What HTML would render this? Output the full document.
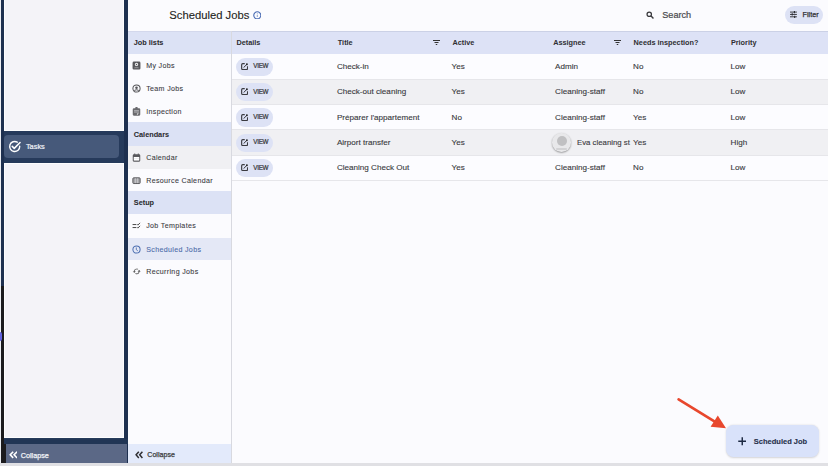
<!DOCTYPE html>
<html><head><meta charset="utf-8">
<style>
*{margin:0;padding:0;box-sizing:border-box}
html,body{width:828px;height:466px;overflow:hidden;background:#fbfbfe;font-family:"Liberation Sans",sans-serif;color:#333}
.a{position:absolute}
.t{position:absolute;white-space:nowrap;line-height:1}
.st{-webkit-text-stroke:0.12px currentColor}
</style></head><body>
<div class="a" style="left:0;top:0;width:127.5px;height:463px;background:#263a5b"></div>
<div class="a" style="left:124px;top:0;width:3.5px;height:463px;background:#1e3050"></div>
<div class="a" style="left:1px;top:0;width:3px;height:286px;background:#1e3050"></div>
<div class="a" style="left:0;top:0;width:1px;height:466px;background:#eceef3"></div>
<div class="a" style="left:1px;top:286px;width:3px;height:177px;background:#1b1b1e"></div>
<div class="a" style="left:0;top:332.2px;width:2.3px;height:9px;border-radius:0 4px 4px 0;background:#6262e0"></div>
<div class="a" style="left:4px;top:0;width:120.1px;height:131.3px;background:#f4f3f8;border:1px solid #fdfdfe;border-top:0"></div>
<div class="a" style="left:4px;top:162.6px;width:120.1px;height:275.9px;background:#f4f3f8;border:1px solid #fdfdfe"></div>
<div class="a" style="left:3.6px;top:134.7px;width:115.8px;height:23.2px;background:#46597a;border-radius:4px"></div>
<svg class="a" style="left:8.2px;top:139.6px;width:13.4px;height:13.4px" viewBox="0 0 24 24"><path d="M21 11.2A9 9 0 1 1 16.6 3.9" fill="none" stroke="#fff" stroke-width="2.5" stroke-linecap="round"/><path d="M7.6 11.4l3.6 3.6L21.6 4.4" fill="none" stroke="#fff" stroke-width="2.8" stroke-linecap="round" stroke-linejoin="round"/></svg>
<div class="t st" style="left:25.9px;top:143.1px;font-size:7.4px;color:#eef0f6;-webkit-text-stroke:0.22px #eef0f6">Tasks</div>
<div class="a" style="left:6px;top:443.5px;width:121px;height:19px;background:#5b6886"></div>
<div class="a" style="left:1px;top:443.5px;width:5px;height:19.5px;background:#1b1b1e"></div>
<div class="a" style="left:4px;top:438.5px;width:124px;height:5px;background:#213555"></div>
<svg class="a" style="left:8.6px;top:451.1px;width:8.8px;height:7.6px" viewBox="0 0 17.6 15.2"><path d="M8.4 1.4L2.4 7.6L8.4 13.8M16.2 1.4L10.2 7.6L16.2 13.8" fill="none" stroke="#fff" stroke-width="3.2"/></svg>
<div class="t st" style="left:20.7px;top:452.1px;font-size:7.25px;color:#f2f3f7;-webkit-text-stroke:0.25px #f2f3f7">Collapse</div>
<div class="a" style="left:127.5px;top:0;width:104.5px;height:463px;background:#fbfbfe"></div>
<div class="a" style="left:231px;top:30.6px;width:1px;height:432.4px;background:#d8d9e0"></div>
<div class="a" style="left:127.5px;top:30.60px;width:103.5px;height:23.2px;background:#dce2f5;box-shadow:inset 0 1px 0 #d3d8ec"></div>
<div class="t st" style="left:133.8px;top:39.10px;font-size:7.3px;font-weight:bold;color:#2b2b2e;-webkit-text-stroke:0.05px">Job lists</div>
<svg class="a" style="left:132.4px;top:61.10px;width:9px;height:9px" viewBox="0 0 24 24"><path fill="#58585c" d="M5 1.5h14a3.5 3.5 0 0 1 3.5 3.5v14a3.5 3.5 0 0 1-3.5 3.5H5A3.5 3.5 0 0 1 1.5 19V5A3.5 3.5 0 0 1 5 1.5z"/><circle cx="12" cy="9.2" r="4.3" fill="#fff"/><circle cx="12" cy="9.2" r="2.1" fill="#58585c"/><path fill="#8a8a8e" d="M5 19.2c1.5-2.6 4-3.8 7-3.8s5.5 1.2 7 3.8z"/></svg>
<div class="t st" style="left:146.2px;top:63.05px;font-size:7.1px;letter-spacing:0.33px;color:#3a3a3e;-webkit-text-stroke:0.08px #3a3a3e">My Jobs</div>
<svg class="a" style="left:132.4px;top:83.90px;width:9px;height:9px" viewBox="0 0 24 24"><circle cx="12" cy="12" r="9.6" fill="none" stroke="#555558" stroke-width="2.7"/><circle cx="12" cy="9.8" r="3.4" fill="#555558"/><path d="M6.2 18.2c1.6-2 3.6-3 5.8-3s4.2 1 5.8 3" fill="none" stroke="#6a6a6e" stroke-width="2.8"/></svg>
<div class="t st" style="left:146.2px;top:85.85px;font-size:7.1px;letter-spacing:0.33px;color:#3a3a3e;-webkit-text-stroke:0.08px #3a3a3e">Team Jobs</div>
<svg class="a" style="left:132.4px;top:106.70px;width:9px;height:9px" viewBox="0 0 24 24"><path fill="#6a6a6e" d="M5 3h3.6a3.4 3.4 0 0 1 6.8 0H19a3 3 0 0 1 3 3v14a3 3 0 0 1-3 3H5a3 3 0 0 1-3-3V6a3 3 0 0 1 3-3z"/><path fill="#bcbcc0" d="M5.5 8h13v2.3h-13zM5.5 12.3h13v2.3h-13z"/><path fill="#fff" d="M13.2 17h5.3l-5.3 4.5z"/></svg>
<div class="t st" style="left:146.2px;top:108.65px;font-size:7.1px;letter-spacing:0.33px;color:#3a3a3e;-webkit-text-stroke:0.08px #3a3a3e">Inspection</div>
<div class="a" style="left:127.5px;top:122.10px;width:103.5px;height:23.6px;background:#dce2f5"></div>
<div class="t st" style="left:133.8px;top:130.60px;font-size:7.3px;font-weight:bold;color:#2b2b2e;-webkit-text-stroke:0.05px">Calendars</div>
<div class="a" style="left:127.5px;top:145.70px;width:103.5px;height:22.9px;background:#f0f0f3"></div>
<svg class="a" style="left:132.4px;top:153.00px;width:9px;height:9px" viewBox="0 0 24 24"><path fill="#58585c" d="M6 1.2h2.6v2.3h6.8V1.2H18v2.3h1a3 3 0 0 1 3 3V20a3 3 0 0 1-3 3H5a3 3 0 0 1-3-3V6.5a3 3 0 0 1 3-3h1z"/><rect x="4.7" y="10.6" width="14.6" height="9.6" fill="#fff"/><rect x="4.7" y="15" width="14.6" height="0.9" fill="#d0d0d4"/></svg>
<div class="t st" style="left:146.2px;top:154.95px;font-size:7.1px;letter-spacing:0.33px;color:#3a3a3e;-webkit-text-stroke:0.08px #3a3a3e">Calendar</div>
<svg class="a" style="left:132.4px;top:175.90px;width:9px;height:9px" viewBox="0 0 24 24"><rect x="2.3" y="4.9" width="19.4" height="15.2" rx="2.2" fill="#a4a4a8" stroke="#58585c" stroke-width="2.6"/><path d="M9 6v13M15 6v13" stroke="#d6d6da" stroke-width="1.8"/></svg>
<div class="t st" style="left:146.2px;top:177.85px;font-size:7.1px;letter-spacing:0.33px;color:#3a3a3e;-webkit-text-stroke:0.08px #3a3a3e">Resource Calendar</div>
<div class="a" style="left:127.5px;top:190.90px;width:103.5px;height:23.3px;background:#dce2f5"></div>
<div class="t st" style="left:133.8px;top:199.40px;font-size:7.3px;font-weight:bold;color:#2b2b2e;-webkit-text-stroke:0.05px">Setup</div>
<svg class="a" style="left:132.4px;top:221.50px;width:9px;height:9px" viewBox="0 0 24 24"><path d="M1.5 6.8h9.5M1.5 14.8h9.5" stroke="#444" stroke-width="2.6"/><path d="M13 5.8l2.5 2.5 6-6M13 13.8l2.5 2.5 6-6" fill="none" stroke="#444" stroke-width="2.6"/></svg>
<div class="t st" style="left:146.2px;top:223.45px;font-size:7.1px;letter-spacing:0.33px;color:#3a3a3e;-webkit-text-stroke:0.08px #3a3a3e">Job Templates</div>
<div class="a" style="left:127.5px;top:237.70px;width:103.5px;height:22.4px;background:#e4e8f6"></div>
<svg class="a" style="left:132.4px;top:245.00px;width:9px;height:9px" viewBox="0 0 24 24"><circle cx="12" cy="12" r="9.6" fill="none" stroke="#4a6db0" stroke-width="2.7"/><path d="M11.5 6.5v6l4 3" fill="none" stroke="#4a6db0" stroke-width="2.3"/></svg>
<div class="t st" style="left:146.2px;top:246.95px;font-size:7.1px;letter-spacing:0.33px;color:#4b6aa8;-webkit-text-stroke:0.08px #4b6aa8">Scheduled Jobs</div>
<svg class="a" style="left:132.4px;top:267.40px;width:9px;height:9px" viewBox="0 0 24 24"><path fill="#444" d="M19 8l-4 4h3c0 3.31-2.69 6-6 6-1.01 0-1.97-.25-2.8-.7l-1.46 1.46C8.97 19.54 10.43 20 12 20c4.42 0 8-3.58 8-8h3l-4-4zM6 12c0-3.31 2.69-6 6-6 1.01 0 1.97.25 2.8.7l1.46-1.46C15.03 4.46 13.57 4 12 4c-4.42 0-8 3.58-8 8H1l4 4 4-4H6z" stroke="#444" stroke-width="0.3" transform="translate(1.5 0.8) scale(0.92)"/></svg>
<div class="t st" style="left:146.2px;top:269.35px;font-size:7.1px;letter-spacing:0.33px;color:#3a3a3e;-webkit-text-stroke:0.08px #3a3a3e">Recurring Jobs</div>
<div class="a" style="left:128px;top:443.7px;width:103px;height:19.3px;background:#e3eafb"></div>
<svg class="a" style="left:135.2px;top:451.1px;width:8px;height:7.6px" viewBox="0 0 16 15.2"><path d="M7.6 1.4L2.2 7.6L7.6 13.8M14.8 1.4L9.4 7.6L14.8 13.8" fill="none" stroke="#2e2e32" stroke-width="3"/></svg>
<div class="t st" style="left:147.3px;top:452.1px;font-size:7.1px;color:#3c3c40;-webkit-text-stroke:0.25px #3c3c40">Collapse</div>
<div class="t st" style="left:169.3px;top:9.8px;font-size:11.25px;color:#1f1f22">Scheduled Jobs</div>
<svg class="a" style="left:252.6px;top:10.6px;width:8.6px;height:8.6px" viewBox="0 0 16 16"><circle cx="8" cy="8" r="6.6" fill="none" stroke="#4a6cb4" stroke-width="2.1"/><path d="M8 7.2v4" stroke="#7d95c8" stroke-width="1.6"/><circle cx="8" cy="5" r="0.95" fill="#7d95c8"/></svg>
<svg class="a" style="left:646.3px;top:10.8px;width:8.1px;height:8px" viewBox="0 0 16 16"><circle cx="6.4" cy="6.4" r="4.4" fill="none" stroke="#3a3a3e" stroke-width="2.5"/><path d="M9.6 9.6L14.8 14.8" stroke="#3a3a3e" stroke-width="2.8"/></svg>
<div class="t st" style="left:662.3px;top:10.8px;font-size:9.1px;color:#48484c;-webkit-text-stroke:0.2px #48484c">Search</div>
<div class="a" style="left:785.3px;top:5.8px;width:38.1px;height:18px;border-radius:9px;background:#dde2f5"></div>
<svg class="a" style="left:790.3px;top:11.2px;width:6.9px;height:6.9px" viewBox="0 0 14 14"><path d="M0 2.2h14M0 7h14M0 11.8h14" stroke="#3a3a40" stroke-width="2"/><path d="M9 0v4.4M4.5 4.8v4.4M9.5 9.6v4.4" stroke="#2a2a30" stroke-width="2.2"/></svg>
<div class="t st" style="left:802.6px;top:11.4px;font-size:7.2px;color:#2f2f33;-webkit-text-stroke:0.25px #2f2f33">Filter</div>
<div class="a" style="left:232px;top:30.6px;width:596px;height:23.2px;background:#dde2f6;box-shadow:inset 0 1px 0 #cbd1e6"></div>
<div class="t" style="left:236.4px;top:39.2px;font-size:7.3px;font-weight:bold;color:#2f2f33">Details</div>
<div class="t" style="left:337.8px;top:39.2px;font-size:7.3px;font-weight:bold;color:#2f2f33">Title</div>
<div class="t" style="left:452.4px;top:39.2px;font-size:7.3px;font-weight:bold;color:#2f2f33">Active</div>
<div class="t" style="left:553.2px;top:39.2px;font-size:7.3px;font-weight:bold;color:#2f2f33">Assignee</div>
<div class="t" style="left:633.6px;top:39.2px;font-size:7.3px;font-weight:bold;color:#2f2f33">Needs inspection?</div>
<div class="t" style="left:730.9px;top:39.2px;font-size:7.3px;font-weight:bold;color:#2f2f33">Priority</div>
<svg class="a" style="left:432.7px;top:39.6px;width:7px;height:5px" viewBox="0 0 14 10"><path d="M0 1h14M3 5h8M5.5 9h3" stroke="#333" stroke-width="2"/></svg>
<svg class="a" style="left:613.8px;top:39.6px;width:7px;height:5px" viewBox="0 0 14 10"><path d="M0 1h14M3 5h8M5.5 9h3" stroke="#333" stroke-width="2"/></svg>
<div class="a" style="left:232px;top:54.30px;width:596px;height:25.33px;background:#fcfcff;border-bottom:1px solid #e6e6ea"></div>
<div class="a" style="left:236px;top:57.80px;width:36.8px;height:18.2px;border-radius:9.1px;background:#dde2f5"></div>
<svg class="a" style="left:241.3px;top:63.00px;width:7px;height:7.2px" viewBox="0 0 14 14.4"><path d="M7.5 1.3H3.4C2.2 1.3 1.3 2.2 1.3 3.4v7.6c0 1.2.9 2.1 2.1 2.1H11c1.2 0 2.1-.9 2.1-2.1V6.5" fill="none" stroke="#3a3a40" stroke-width="2.3"/><path d="M5.2 9.2L11.8 2.6" stroke="#303036" stroke-width="2"/><circle cx="11.8" cy="2.4" r="1.9" fill="#222"/></svg>
<div class="t st" style="left:253.3px;top:63.30px;font-size:6.3px;letter-spacing:-0.3px;color:#38383c;-webkit-text-stroke:0.22px #38383c">VIEW</div>
<div class="t st" style="left:336.9px;top:63.05px;font-size:8.1px;letter-spacing:0;color:#3a3a3e">Check-in</div>
<div class="t st" style="left:451.6px;top:63.05px;font-size:8.1px;letter-spacing:0;color:#3a3a3e">Yes</div>
<div class="t st" style="left:555.1px;top:63.05px;font-size:8.1px;letter-spacing:0;color:#3a3a3e">Admin</div>
<div class="t st" style="left:633.1px;top:63.05px;font-size:8.1px;letter-spacing:0;color:#3a3a3e">No</div>
<div class="t st" style="left:730.6px;top:63.05px;font-size:8.1px;letter-spacing:0;color:#3a3a3e">Low</div>
<div class="a" style="left:232px;top:79.63px;width:596px;height:25.33px;background:#f0f0f3;border-bottom:1px solid #e6e6ea"></div>
<div class="a" style="left:236px;top:83.13px;width:36.8px;height:18.2px;border-radius:9.1px;background:#dde2f5"></div>
<svg class="a" style="left:241.3px;top:88.33px;width:7px;height:7.2px" viewBox="0 0 14 14.4"><path d="M7.5 1.3H3.4C2.2 1.3 1.3 2.2 1.3 3.4v7.6c0 1.2.9 2.1 2.1 2.1H11c1.2 0 2.1-.9 2.1-2.1V6.5" fill="none" stroke="#3a3a40" stroke-width="2.3"/><path d="M5.2 9.2L11.8 2.6" stroke="#303036" stroke-width="2"/><circle cx="11.8" cy="2.4" r="1.9" fill="#222"/></svg>
<div class="t st" style="left:253.3px;top:88.63px;font-size:6.3px;letter-spacing:-0.3px;color:#38383c;-webkit-text-stroke:0.22px #38383c">VIEW</div>
<div class="t st" style="left:336.9px;top:88.38px;font-size:8.1px;letter-spacing:0;color:#3a3a3e">Check-out cleaning</div>
<div class="t st" style="left:451.6px;top:88.38px;font-size:8.1px;letter-spacing:0;color:#3a3a3e">Yes</div>
<div class="t st" style="left:555.1px;top:88.38px;font-size:8.1px;letter-spacing:0;color:#3a3a3e">Cleaning-staff</div>
<div class="t st" style="left:633.1px;top:88.38px;font-size:8.1px;letter-spacing:0;color:#3a3a3e">No</div>
<div class="t st" style="left:730.6px;top:88.38px;font-size:8.1px;letter-spacing:0;color:#3a3a3e">Low</div>
<div class="a" style="left:232px;top:104.96px;width:596px;height:25.33px;background:#fcfcff;border-bottom:1px solid #e6e6ea"></div>
<div class="a" style="left:236px;top:108.46px;width:36.8px;height:18.2px;border-radius:9.1px;background:#dde2f5"></div>
<svg class="a" style="left:241.3px;top:113.66px;width:7px;height:7.2px" viewBox="0 0 14 14.4"><path d="M7.5 1.3H3.4C2.2 1.3 1.3 2.2 1.3 3.4v7.6c0 1.2.9 2.1 2.1 2.1H11c1.2 0 2.1-.9 2.1-2.1V6.5" fill="none" stroke="#3a3a40" stroke-width="2.3"/><path d="M5.2 9.2L11.8 2.6" stroke="#303036" stroke-width="2"/><circle cx="11.8" cy="2.4" r="1.9" fill="#222"/></svg>
<div class="t st" style="left:253.3px;top:113.96px;font-size:6.3px;letter-spacing:-0.3px;color:#38383c;-webkit-text-stroke:0.22px #38383c">VIEW</div>
<div class="t st" style="left:336.9px;top:113.71px;font-size:8.1px;letter-spacing:0;color:#3a3a3e">Préparer l'appartement</div>
<div class="t st" style="left:451.6px;top:113.71px;font-size:8.1px;letter-spacing:0;color:#3a3a3e">No</div>
<div class="t st" style="left:555.1px;top:113.71px;font-size:8.1px;letter-spacing:0;color:#3a3a3e">Cleaning-staff</div>
<div class="t st" style="left:633.1px;top:113.71px;font-size:8.1px;letter-spacing:0;color:#3a3a3e">Yes</div>
<div class="t st" style="left:730.6px;top:113.71px;font-size:8.1px;letter-spacing:0;color:#3a3a3e">Low</div>
<div class="a" style="left:232px;top:130.29px;width:596px;height:25.33px;background:#f0f0f3;border-bottom:1px solid #e6e6ea"></div>
<div class="a" style="left:236px;top:133.79px;width:36.8px;height:18.2px;border-radius:9.1px;background:#dde2f5"></div>
<svg class="a" style="left:241.3px;top:138.99px;width:7px;height:7.2px" viewBox="0 0 14 14.4"><path d="M7.5 1.3H3.4C2.2 1.3 1.3 2.2 1.3 3.4v7.6c0 1.2.9 2.1 2.1 2.1H11c1.2 0 2.1-.9 2.1-2.1V6.5" fill="none" stroke="#3a3a40" stroke-width="2.3"/><path d="M5.2 9.2L11.8 2.6" stroke="#303036" stroke-width="2"/><circle cx="11.8" cy="2.4" r="1.9" fill="#222"/></svg>
<div class="t st" style="left:253.3px;top:139.29px;font-size:6.3px;letter-spacing:-0.3px;color:#38383c;-webkit-text-stroke:0.22px #38383c">VIEW</div>
<div class="t st" style="left:336.9px;top:139.04px;font-size:8.1px;letter-spacing:0;color:#3a3a3e">Airport transfer</div>
<div class="t st" style="left:451.6px;top:139.04px;font-size:8.1px;letter-spacing:0;color:#3a3a3e">Yes</div>
<div class="a" style="left:552.2px;top:133.19px;width:18.6px;height:18.6px;border-radius:50%;background:#e8e8ea;box-shadow:0 0.7px 1.8px rgba(0,0,0,.4)"></div>
<div class="a" style="left:556.5px;top:135.99px;width:10px;height:10px;border-radius:50%;background:#c0c0c2"></div>
<div class="a" style="left:556px;top:147.69px;width:11px;height:2.2px;border-radius:1px;background:#d2d2d4"></div>
<div class="t st" style="left:577px;top:139.04px;font-size:7.8px;color:#3a3a3e">Eva cleaning st</div>
<div class="t st" style="left:633.1px;top:139.04px;font-size:8.1px;letter-spacing:0;color:#3a3a3e">Yes</div>
<div class="t st" style="left:730.6px;top:139.04px;font-size:8.1px;letter-spacing:0;color:#3a3a3e">High</div>
<div class="a" style="left:232px;top:155.62px;width:596px;height:25.33px;background:#fcfcff;border-bottom:1px solid #e6e6ea"></div>
<div class="a" style="left:236px;top:159.12px;width:36.8px;height:18.2px;border-radius:9.1px;background:#dde2f5"></div>
<svg class="a" style="left:241.3px;top:164.32px;width:7px;height:7.2px" viewBox="0 0 14 14.4"><path d="M7.5 1.3H3.4C2.2 1.3 1.3 2.2 1.3 3.4v7.6c0 1.2.9 2.1 2.1 2.1H11c1.2 0 2.1-.9 2.1-2.1V6.5" fill="none" stroke="#3a3a40" stroke-width="2.3"/><path d="M5.2 9.2L11.8 2.6" stroke="#303036" stroke-width="2"/><circle cx="11.8" cy="2.4" r="1.9" fill="#222"/></svg>
<div class="t st" style="left:253.3px;top:164.62px;font-size:6.3px;letter-spacing:-0.3px;color:#38383c;-webkit-text-stroke:0.22px #38383c">VIEW</div>
<div class="t st" style="left:336.9px;top:164.37px;font-size:8.1px;letter-spacing:0;color:#3a3a3e">Cleaning Check Out</div>
<div class="t st" style="left:451.6px;top:164.37px;font-size:8.1px;letter-spacing:0;color:#3a3a3e">Yes</div>
<div class="t st" style="left:555.1px;top:164.37px;font-size:8.1px;letter-spacing:0;color:#3a3a3e">Cleaning-staff</div>
<div class="t st" style="left:633.1px;top:164.37px;font-size:8.1px;letter-spacing:0;color:#3a3a3e">No</div>
<div class="t st" style="left:730.6px;top:164.37px;font-size:8.1px;letter-spacing:0;color:#3a3a3e">Low</div>
<div class="a" style="left:726px;top:425.1px;width:93.3px;height:32px;border-radius:7.5px;background:#d9e2fa;box-shadow:0 0.6px 2px rgba(0,0,0,.16)"></div>
<svg class="a" style="left:737.9px;top:437px;width:8.5px;height:8.5px" viewBox="0 0 17 17"><path d="M8.5 0.5v16M0.5 8.5h16" stroke="#1d2942" stroke-width="2.9"/></svg>
<div class="t st" style="left:753.8px;top:437.9px;font-size:7.5px;font-weight:bold;color:#27304a;-webkit-text-stroke:0.12px #27304a">Scheduled Job</div>
<svg class="a" style="left:0;top:0;width:828px;height:466px" viewBox="0 0 828 466"><path d="M678.6 399.4L716 422.3" stroke="#e8472d" stroke-width="2.7" stroke-linecap="round"/><path d="M710.6 426.7L717.8 415.6L726 428.2Z" fill="#e8472d"/></svg>
<div class="a" style="left:0;top:462.6px;width:828px;height:3.4px;background:#e0e0e4"></div>
</body></html>
